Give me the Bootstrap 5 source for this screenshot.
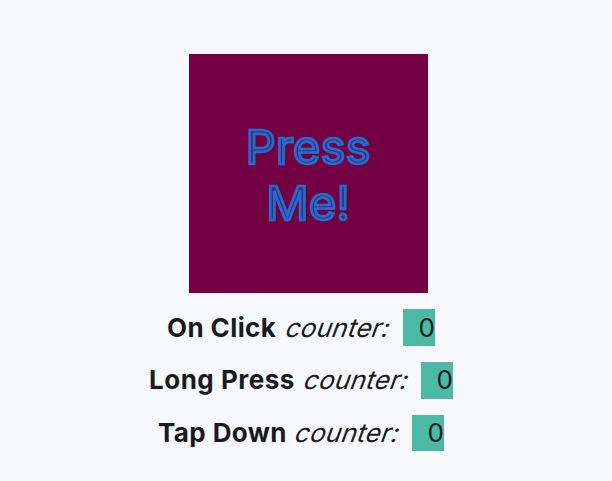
<!DOCTYPE html>
<html lang="en">
<head>
<meta charset="utf-8">
<meta name="viewport" content="width=device-width, initial-scale=1">
<title>Press counter</title>
<link href="https://cdn.jsdelivr.net/npm/bootstrap@5.3.0/dist/css/bootstrap.min.css" rel="stylesheet">
<style>
body{background:#f6f8fd;color:#191a20;font-family:Inter,"Liberation Sans",sans-serif;height:481px;overflow:hidden;padding-top:53.5px}
.press-box{width:239.5px;height:239.5px;background:#720043;margin-left:188.5px;padding:4px 0 0;font-size:47px;line-height:56px;letter-spacing:.2px}
.press-label{color:#482475;-webkit-text-stroke:2.6px #1f6fcc}
.counter-line{height:36.5px;margin-top:16.3px;font-size:26px;line-height:36px;letter-spacing:.5px}
.counter-line em{font-style:normal;transform:skewX(-20deg);width:103px;letter-spacing:.25px}
.counter-line strong{white-space:nowrap}
.counter-value{background:#4cb9a2;width:32px;margin-left:13.5px;letter-spacing:0}
.line-click{width:268px;margin-left:167px;line-height:37px;letter-spacing:.4px}.line-long{width:304px;margin-left:149px}.line-tap{width:286px;margin-left:158px;letter-spacing:.4px}
</style>
</head>
<body>
<main>
<button type="button" class="press-box d-flex align-items-center justify-content-center text-center border-0"><span class="press-label">Press<br>Me!</span></button>
<div class="counter-line line-click d-flex justify-content-between"><strong>On Click</strong><div class="d-flex"><em>counter:</em><span class="counter-value text-end">0</span></div></div>
<div class="counter-line line-long d-flex justify-content-between"><strong>Long Press</strong><div class="d-flex"><em>counter:</em><span class="counter-value text-end">0</span></div></div>
<div class="counter-line line-tap d-flex justify-content-between"><strong>Tap Down</strong><div class="d-flex"><em>counter:</em><span class="counter-value text-end">0</span></div></div>
</main>
<script src="https://cdn.jsdelivr.net/npm/bootstrap@5.3.0/dist/js/bootstrap.bundle.min.js"></script>
</body>
</html>
